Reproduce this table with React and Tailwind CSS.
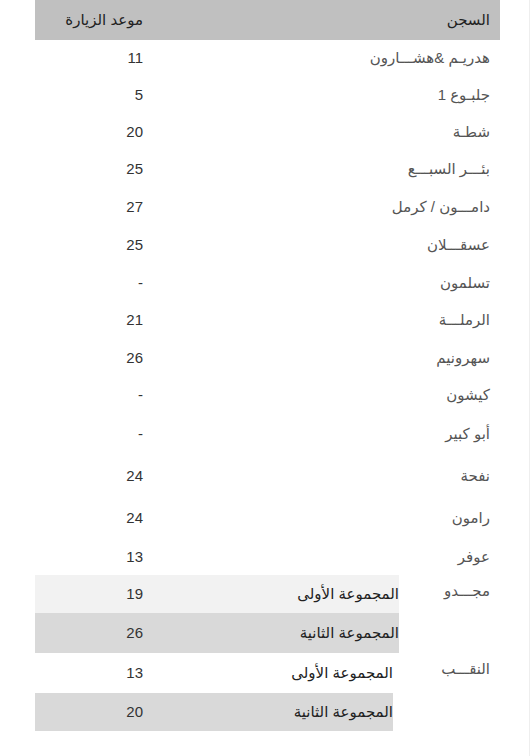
import React from "react";

const prisons = [
  { name: "هدريـم &هشـــارون", date: "11", h: "h-[37px]" },
  { name: "جلبـوع 1", date: "5", h: "h-[37px]" },
  { name: "شطـة", date: "20", h: "h-[37px]" },
  { name: "بئـــر السبـــع", date: "25", h: "h-[37px]" },
  { name: "دامـــون / كرمل", date: "27", h: "h-[38px]" },
  { name: "عسقـــلان", date: "25", h: "h-[38px]" },
  { name: "تسلمون", date: "-", h: "h-[38px]" },
  { name: "الرملـــة", date: "21", h: "h-[37px]" },
  { name: "سهرونيم", date: "26", h: "h-[38px]" },
  { name: "كيشون", date: "-", h: "h-[37px]" },
  { name: "أبو كبير", date: "-", h: "h-[41px]" },
  { name: "نفحة", date: "24", h: "h-[42px]" },
  { name: "رامون", date: "24", h: "h-[42px]" },
  { name: "عوفر", date: "13", h: "h-[36px]" },
];

const groups = [
  {
    name: "مجـــدو",
    label: "w-[101px]",
    rows: [
      { name: "المجموعة الأولى", date: "19", cls: "h-[38px] bg-[#f2f2f2]" },
      { name: "المجموعة الثانية", date: "26", cls: "h-[40px] bg-[#d9d9d9]" },
    ],
  },
  {
    name: "النقـــب",
    label: "w-[107px]",
    rows: [
      { name: "المجموعة الأولى", date: "13", cls: "h-[40px] bg-white" },
      { name: "المجموعة الثانية", date: "20", cls: "h-[38px] bg-[#d9d9d9]" },
    ],
  },
];

export default function App() {
  return (
    <div className="min-h-[756px] w-[530px] border-r border-[#eeeeee] bg-white font-['Liberation_Sans','DejaVu_Sans',sans-serif] text-[15px]">
      <div dir="rtl" className="ml-[35px] w-[465px]">
        {/* Header */}
        <div className="flex h-[40px] items-center bg-[#c0c0c0] text-[#222]">
          <div className="flex-1 pr-[10px]">السجن</div>
          <div className="w-[108px]">موعد الزيارة</div>
        </div>

        {/* Prisons */}
        {prisons.map((p, i) => (
          <div key={i} className={`flex items-center ${p.h}`}>
            <div className="flex-1 pr-[10px] text-[#555]">{p.name}</div>
            <div className="w-[108px] text-[#333]">{p.date}</div>
          </div>
        ))}

        {/* Prisons split into groups */}
        {groups.map((g, i) => (
          <div key={i} className="flex">
            <div className={`${g.label} pr-[10px] pt-[5px] text-[#555]`}>{g.name}</div>
            <div className="flex-1">
              {g.rows.map((r, j) => (
                <div key={j} className={`flex items-center ${r.cls}`}>
                  <div className="flex-1 text-[#222]">{r.name}</div>
                  <div className="w-[108px] text-[#333]">{r.date}</div>
                </div>
              ))}
            </div>
          </div>
        ))}
      </div>
    </div>
  );
}
